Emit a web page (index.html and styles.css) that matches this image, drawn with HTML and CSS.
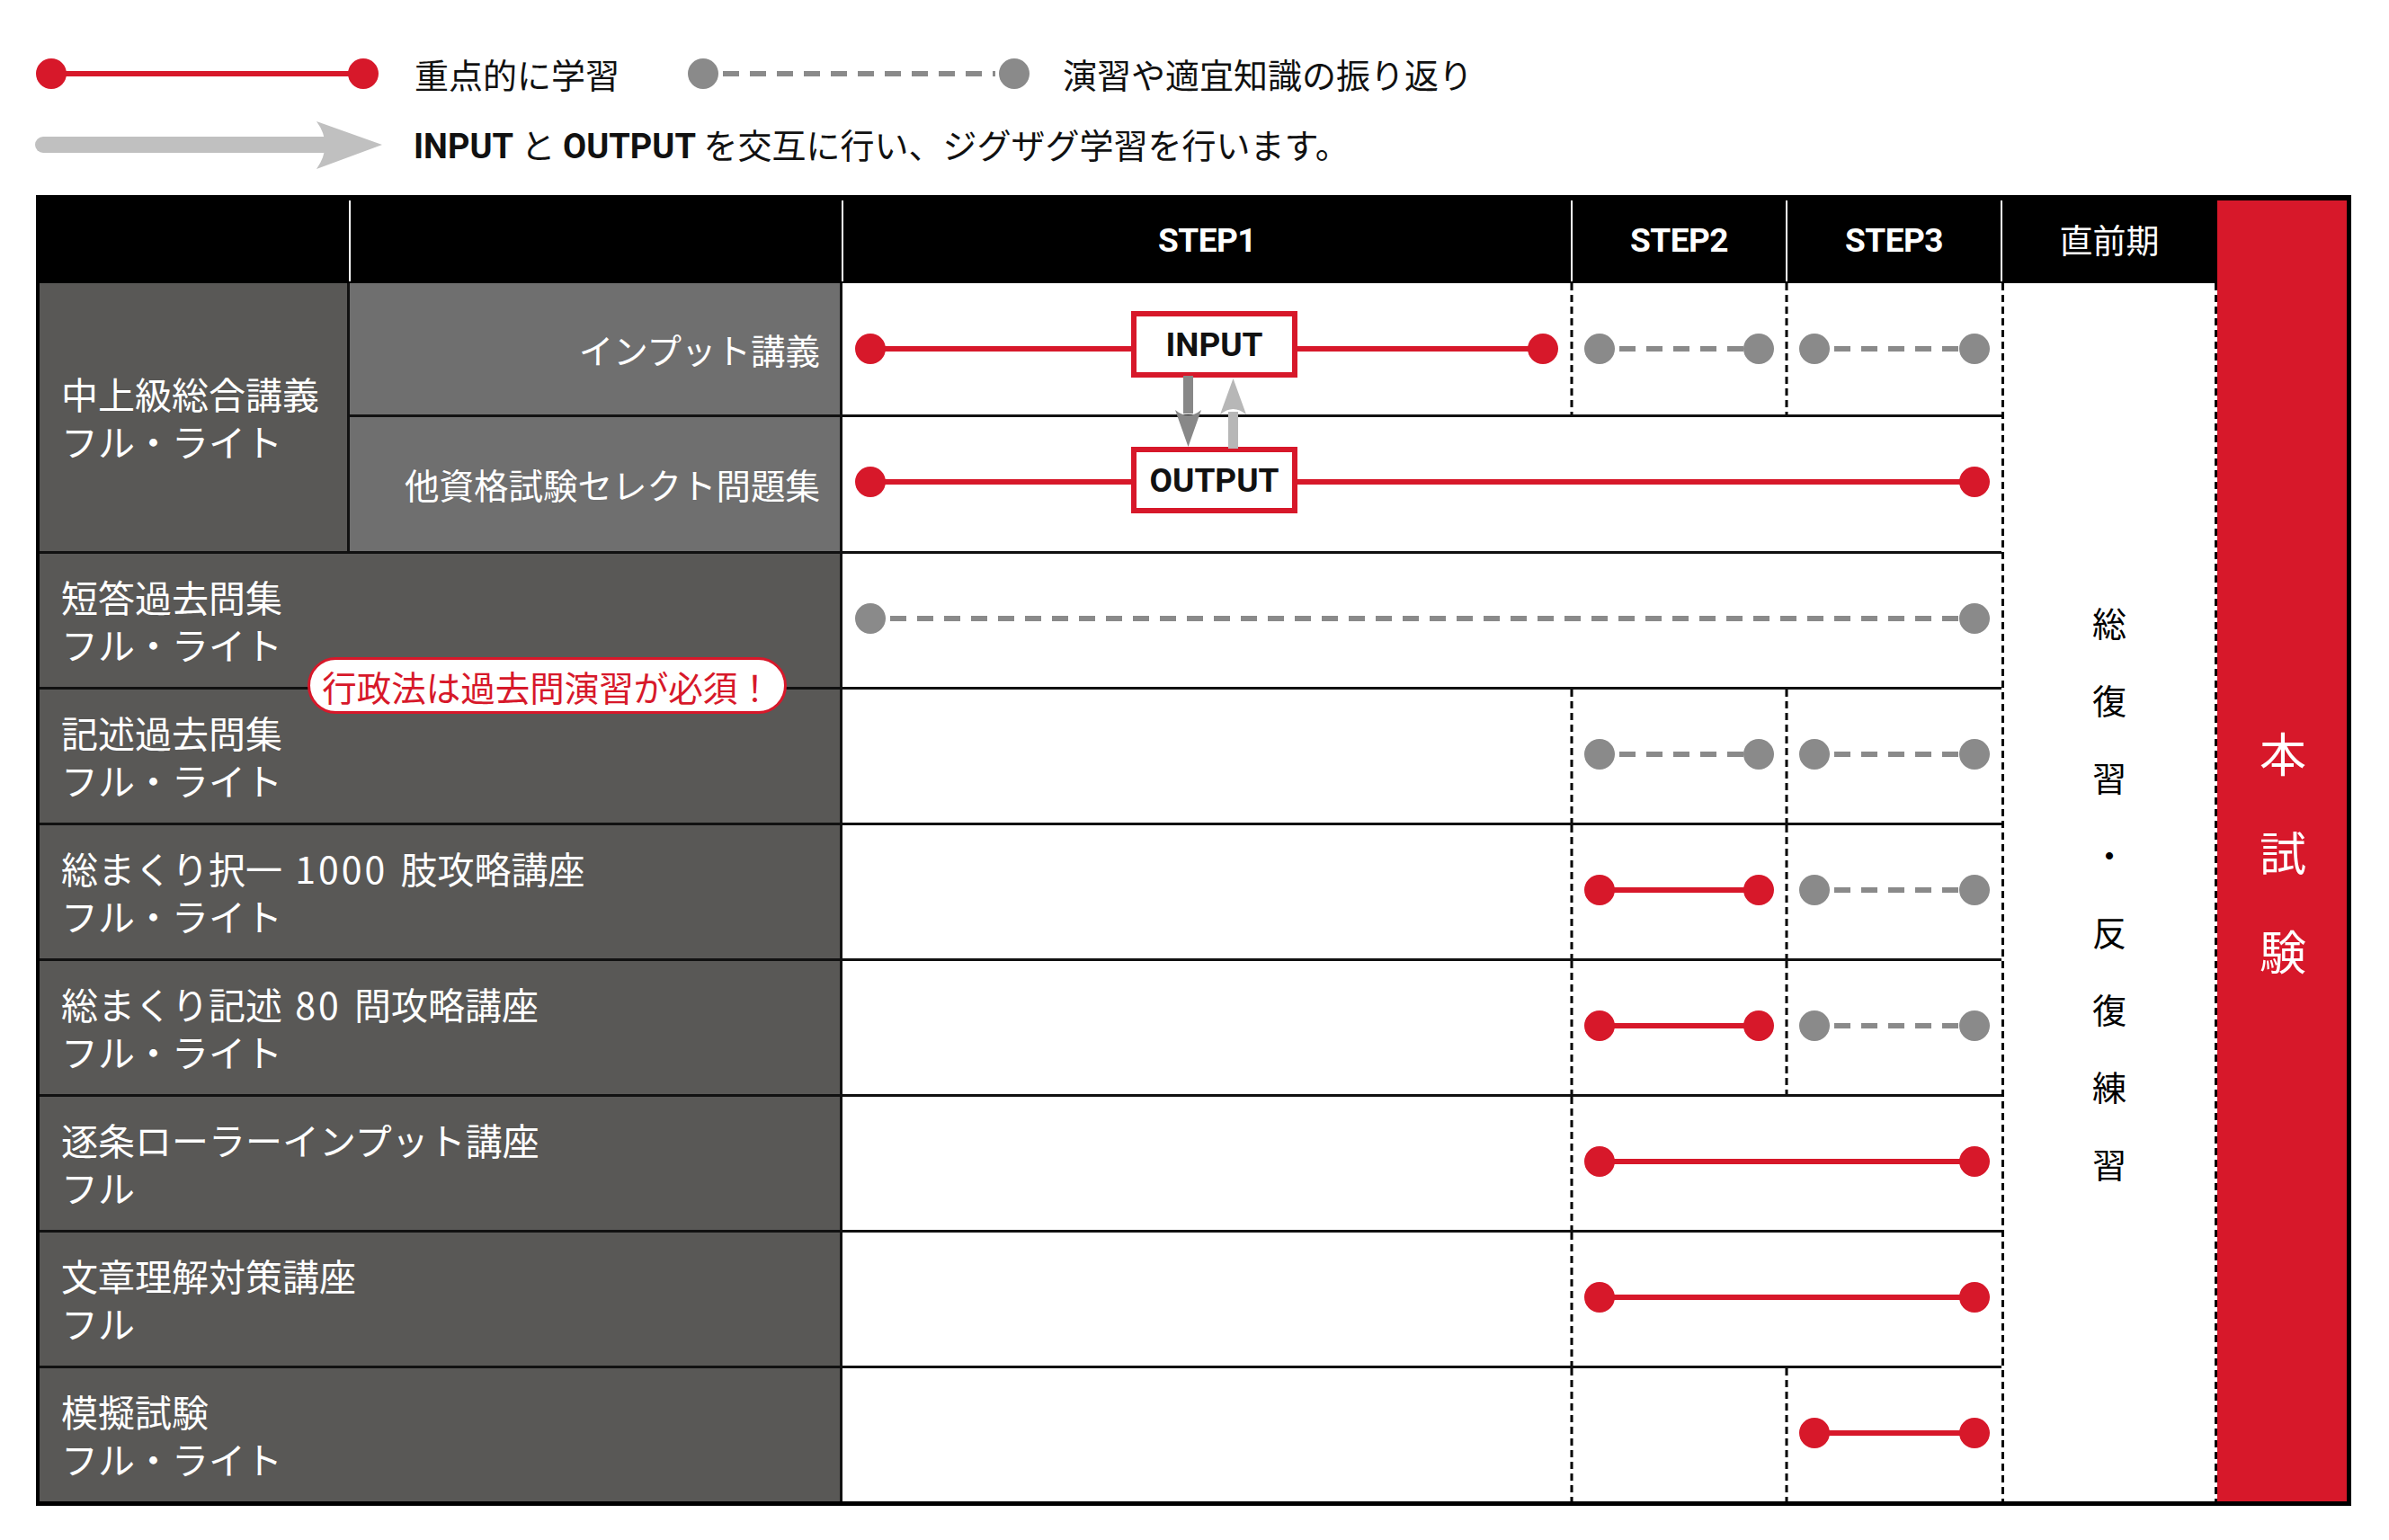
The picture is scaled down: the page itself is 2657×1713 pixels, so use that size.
FILE: index.html
```html
<!DOCTYPE html>
<html lang="ja">
<head>
<meta charset="utf-8">
<title>学習スケジュール</title>
<link rel="stylesheet" href="styles.css">
</head>
<body>
<div class="page">
  <div class="legend">
    <div class="legend-row row-a">
      <svg class="key" width="381" height="34" viewBox="0 0 381 34">
        <line class="solid" x1="17" y1="17" x2="364" y2="17"/>
        <circle class="dr" cx="17" cy="17" r="17"/>
        <circle class="dr" cx="364" cy="17" r="17"/>
      </svg>
      <span class="key-label">重点的に学習</span>
      <svg class="key key-gray" width="380" height="34" viewBox="0 0 380 34">
        <line class="dash" x1="39" y1="17" x2="342" y2="17"/>
        <circle class="dg" cx="17" cy="17" r="17"/>
        <circle class="dg" cx="363" cy="17" r="17"/>
      </svg>
      <span class="key-label">演習や適宜知識の振り返り</span>
    </div>
    <div class="legend-row row-b">
      <svg class="big-arrow" width="386" height="56" viewBox="0 0 386 56">
        <rect x="0" y="19" width="330" height="18" rx="9" fill="#c0c0c0"/>
        <path d="M313 2 L386 28 L313 55 Q332 28 313 2 Z" fill="#c0c0c0"/>
      </svg>
      <p class="key-label note"><b class="latin">INPUT</b> と <b class="latin">OUTPUT</b> を交互に行い、ジグザグ学習を行います。</p>
    </div>
  </div>

  <div class="chart">
    <div class="h"></div>
    <div class="h sep"></div>
    <div class="h sep step">STEP1</div>
    <div class="h sep step">STEP2</div>
    <div class="h sep step">STEP3</div>
    <div class="h sep pre">直前期</div>

    <div class="exam"><span>本</span><span>試</span><span>験</span></div>
    <div class="review"><span>総</span><span>復</span><span>習</span><span>・</span><span>反</span><span>復</span><span>練</span><span>習</span></div>

    <div class="lab main"><span class="ln">中上級総合講義</span><span class="ln">フル・ライト</span></div>

    <div class="lab sub"><span class="ln">インプット講義</span></div>
    <div class="lane">
      <svg width="1289" height="146" viewBox="0 0 1289 146">
        <line class="div" x1="811" y1="0" x2="811" y2="146"/>
        <line class="div" x1="1050" y1="0" x2="1050" y2="146"/>
        <line class="solid" x1="31" y1="73" x2="779" y2="73"/>
        <circle class="dr" cx="31" cy="73" r="17"/><circle class="dr" cx="779" cy="73" r="17"/>
        <line class="dash" x1="864" y1="73" x2="1002" y2="73"/>
        <circle class="dg" cx="842" cy="73" r="17"/><circle class="dg" cx="1019" cy="73" r="17"/>
        <line class="dash" x1="1103" y1="73" x2="1242" y2="73"/>
        <circle class="dg" cx="1081" cy="73" r="17"/><circle class="dg" cx="1259" cy="73" r="17"/>
      </svg>
      <div class="io in-box">INPUT</div>
      <svg class="io-arrows" width="90" height="82" viewBox="0 0 90 82">
        <rect x="16" y="0" width="11" height="42" fill="#888888"/>
        <path d="M7 38 L21.5 79 L36 38 Q21.5 50 7 38 Z" fill="#888888"/>
        <rect x="66" y="40" width="11" height="41" fill="#b7b7b7"/>
        <path d="M57 43 L71.5 3 L86 43 Q71.5 31 57 43 Z" fill="#b7b7b7"/>
      </svg>
    </div>

    <div class="lab sub bt"><span class="ln">他資格試験セレクト問題集</span></div>
    <div class="lane bt">
      <svg width="1289" height="149" viewBox="0 0 1289 149">
        <line class="solid" x1="31" y1="72" x2="1259" y2="72"/>
        <circle class="dr" cx="31" cy="72" r="17"/><circle class="dr" cx="1259" cy="72" r="17"/>
      </svg>
      <div class="io out-box">OUTPUT</div>
    </div>

    <div class="lab wide bt"><span class="ln">短答過去問集</span><span class="ln">フル・ライト</span></div>
    <div class="lane bt">
      <svg width="1289" height="148" viewBox="0 0 1289 148">
        <line class="dash" x1="53" y1="72" x2="1242" y2="72"/>
        <circle class="dg" cx="31" cy="72" r="17"/><circle class="dg" cx="1259" cy="72" r="17"/>
      </svg>
    </div>

    <div class="lab wide bt"><span class="ln">記述過去問集</span><span class="ln">フル・ライト</span></div>
    <div class="lane bt">
      <svg width="1289" height="148" viewBox="0 0 1289 148">
        <line class="div" x1="811" y1="0" x2="811" y2="148"/>
        <line class="div" x1="1050" y1="0" x2="1050" y2="148"/>
        <line class="dash" x1="864" y1="72" x2="1002" y2="72"/>
        <circle class="dg" cx="842" cy="72" r="17"/><circle class="dg" cx="1019" cy="72" r="17"/>
        <line class="dash" x1="1103" y1="72" x2="1242" y2="72"/>
        <circle class="dg" cx="1081" cy="72" r="17"/><circle class="dg" cx="1259" cy="72" r="17"/>
      </svg>
    </div>

    <div class="lab wide bt"><span class="ln">総まくり択一 <span class="num">1000</span> 肢攻略講座</span><span class="ln">フル・ライト</span></div>
    <div class="lane bt">
      <svg width="1289" height="148" viewBox="0 0 1289 148">
        <line class="div" x1="811" y1="0" x2="811" y2="148"/>
        <line class="div" x1="1050" y1="0" x2="1050" y2="148"/>
        <line class="solid" x1="842" y1="72" x2="1019" y2="72"/>
        <circle class="dr" cx="842" cy="72" r="17"/><circle class="dr" cx="1019" cy="72" r="17"/>
        <line class="dash" x1="1103" y1="72" x2="1242" y2="72"/>
        <circle class="dg" cx="1081" cy="72" r="17"/><circle class="dg" cx="1259" cy="72" r="17"/>
      </svg>
    </div>

    <div class="lab wide bt"><span class="ln">総まくり記述 <span class="num">80</span> 問攻略講座</span><span class="ln">フル・ライト</span></div>
    <div class="lane bt">
      <svg width="1289" height="148" viewBox="0 0 1289 148">
        <line class="div" x1="811" y1="0" x2="811" y2="148"/>
        <line class="div" x1="1050" y1="0" x2="1050" y2="148"/>
        <line class="solid" x1="842" y1="72" x2="1019" y2="72"/>
        <circle class="dr" cx="842" cy="72" r="17"/><circle class="dr" cx="1019" cy="72" r="17"/>
        <line class="dash" x1="1103" y1="72" x2="1242" y2="72"/>
        <circle class="dg" cx="1081" cy="72" r="17"/><circle class="dg" cx="1259" cy="72" r="17"/>
      </svg>
    </div>

    <div class="lab wide bt"><span class="ln">逐条ローラーインプット講座</span><span class="ln">フル</span></div>
    <div class="lane bt">
      <svg width="1289" height="148" viewBox="0 0 1289 148">
        <line class="div" x1="811" y1="0" x2="811" y2="148"/>
        <line class="solid" x1="842" y1="72" x2="1259" y2="72"/>
        <circle class="dr" cx="842" cy="72" r="17"/><circle class="dr" cx="1259" cy="72" r="17"/>
      </svg>
    </div>

    <div class="lab wide bt"><span class="ln">文章理解対策講座</span><span class="ln">フル</span></div>
    <div class="lane bt">
      <svg width="1289" height="148" viewBox="0 0 1289 148">
        <line class="div" x1="811" y1="0" x2="811" y2="148"/>
        <line class="solid" x1="842" y1="72" x2="1259" y2="72"/>
        <circle class="dr" cx="842" cy="72" r="17"/><circle class="dr" cx="1259" cy="72" r="17"/>
      </svg>
    </div>

    <div class="lab wide bt"><span class="ln">模擬試験</span><span class="ln">フル・ライト</span></div>
    <div class="lane bt">
      <svg width="1289" height="148" viewBox="0 0 1289 148">
        <line class="div" x1="811" y1="0" x2="811" y2="148"/>
        <line class="div" x1="1050" y1="0" x2="1050" y2="148"/>
        <line class="solid" x1="1081" y1="72" x2="1259" y2="72"/>
        <circle class="dr" cx="1081" cy="72" r="17"/><circle class="dr" cx="1259" cy="72" r="17"/>
      </svg>
    </div>

    <div class="badge">行政法は過去問演習が必須！</div>
  </div>
</div>
</body>
</html>
```

FILE: styles.css
```css
html, body {
  margin: 0;
  padding: 0;
  background: #ffffff;
}

body {
  font-family: "Noto Sans CJK JP", "Noto Sans", sans-serif;
  font-weight: 400;
  color: #111111;
}

.page {
  width: 2657px;
  padding-left: 40px;
  box-sizing: border-box;
}

/* ---------- legend ---------- */
.legend {
  padding-top: 48px;
}

.legend-row {
  display: flex;
  align-items: center;
}

.row-a {
  height: 68px;
}

.row-b {
  height: 90px;
}

.key {
  display: block;
  flex: none;
}

.key-label {
  margin: 0 0 0 40px;
  font-size: 38px;
  line-height: 1;
  white-space: nowrap;
}

.key-gray {
  margin-left: 76px;
}

.key-gray + .key-label {
  margin-left: 37px;
}

.big-arrow {
  display: block;
  flex: none;
  margin-left: -1px;
}

.note {
  margin-left: 35px;
}

.latin {
  font-family: "Roboto", "Liberation Sans", sans-serif;
  font-weight: 700;
}

/* ---------- chart ---------- */
.chart {
  position: relative;
  margin-top: 11px;
  width: 2575px;
  box-sizing: border-box;
  border-left: 4px solid #000;
  border-right: 5px solid #000;
  border-bottom: 5px solid #000;
  background: #ffffff;
  display: grid;
  grid-template-columns: 345px 548px 811px 239px 239px 240px 144px;
  grid-template-rows: 98px 146px 152px repeat(7, 151px);
}

.h {
  position: relative;
  background: #000;
  color: #fff;
  display: flex;
  align-items: center;
  justify-content: center;
}

.h.sep::before {
  content: "";
  position: absolute;
  left: -1px;
  top: 6px;
  bottom: 2px;
  width: 2px;
  background: #ffffff;
}

.step {
  font-family: "Roboto", "Liberation Sans", sans-serif;
  font-weight: 700;
  font-size: 37px;
  letter-spacing: -0.5px;
  padding-top: 2px;
}

.pre {
  font-size: 37px;
}

.exam {
  grid-column: 7;
  grid-row: 1 / -1;
  background: #d7182a;
  border-top: 6px solid #000;
  color: #fff;
  display: flex;
  flex-direction: column;
  align-items: center;
  justify-content: center;
  font-size: 52px;
  line-height: 110px;
  padding-left: 2px;
}

.review {
  grid-column: 6;
  grid-row: 2 / -1;
  display: flex;
  flex-direction: column;
  align-items: center;
  justify-content: center;
  font-size: 38px;
  line-height: 86px;
  color: #000;
  background:
    repeating-linear-gradient(to bottom, #000 0 8px, transparent 8px 13px) left top / 3px 100% no-repeat,
    repeating-linear-gradient(to bottom, #000 0 8px, transparent 8px 13px) right top / 3px 100% no-repeat,
    #ffffff;
}

.lab {
  background: #595856;
  color: #fff;
  display: flex;
  flex-direction: column;
  justify-content: center;
  padding-left: 24px;
  font-size: 41px;
  line-height: 53px;
  border-right: 3px solid #111;
  white-space: nowrap;
}

.ln {
  display: block;
  height: 53px;
}

.num {
  letter-spacing: 3px;
  margin: 0 5px;
}

.main {
  grid-column: 1;
  grid-row: 2 / 4;
}

.sub {
  grid-column: 2;
  background: #6f6f6f;
  align-items: flex-end;
  padding-right: 22px;
  font-size: 38.5px;
}

.wide {
  grid-column: 1 / 3;
}

.bt {
  border-top: 3px solid #111;
}

.lane {
  grid-column: 3 / 6;
  position: relative;
}

.lane > svg {
  display: block;
}

.solid {
  stroke: #d7182a;
  stroke-width: 6;
}

.dash {
  stroke: #8a8a8a;
  stroke-width: 6;
  stroke-dasharray: 18 12;
}

.dr {
  fill: #d7182a;
}

.dg {
  fill: #8a8a8a;
}

.div {
  stroke: #000;
  stroke-width: 3;
  stroke-dasharray: 8 5;
}

.io {
  position: absolute;
  left: 321px;
  width: 185px;
  height: 74px;
  box-sizing: border-box;
  border: 6px solid #d7182a;
  background: #ffffff;
  display: flex;
  align-items: center;
  justify-content: center;
  font-family: "Roboto", "Liberation Sans", sans-serif;
  font-weight: 700;
  font-size: 37px;
  color: #111;
}

.in-box {
  top: 31px;
}

.out-box {
  top: 33px;
}

.lane > .io-arrows {
  position: absolute;
  left: 363px;
  top: 103px;
  z-index: 3;
}

.badge {
  position: absolute;
  left: 298px;
  top: 514px;
  width: 533px;
  height: 63px;
  box-sizing: border-box;
  border: 3px solid #d7182a;
  border-radius: 32px;
  background: #ffffff;
  color: #d7182a;
  font-size: 38.5px;
  display: flex;
  align-items: center;
  justify-content: center;
  z-index: 4;
  white-space: nowrap;
}
```
